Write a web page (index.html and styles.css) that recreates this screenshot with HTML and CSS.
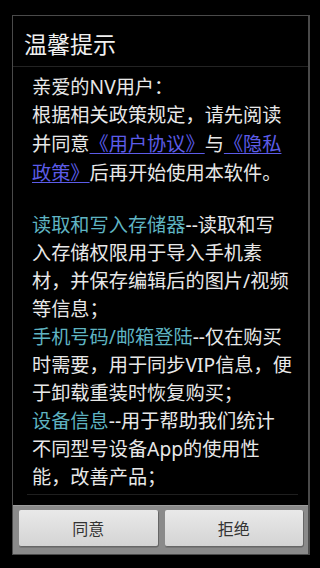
FILE: index.html
```html
<!DOCTYPE html>
<html lang="zh-CN">
<head>
<meta charset="utf-8">
<title>温馨提示</title>
<link rel="stylesheet" href="styles.css">
</head>
<body>
<div class="dialog">
  <div class="title">温馨提示</div>
  <div class="content">
    <p class="para">亲爱的NV用户：<br>根据相关政策规定，请先阅读<br>并同意<a class="link">《用户协议》</a>与<a class="link">《隐私<br>政策》</a>后再开始使用本软件。</p>
    <p class="para"><span class="hl">读取和写入存储器</span>--读取和写<br>入存储权限用于导入手机素<br>材，并保存编辑后的图片/视频<br>等信息；<br><span class="hl">手机号码/邮箱登陆</span>--仅在购买<br>时需要，用于同步VIP信息，便<br>于卸载重装时恢复购买；<br><span class="hl">设备信息</span>--用于帮助我们统计<br>不同型号设备App的使用性<br>能，改善产品；</p>
    <div class="fade-line"></div>
  </div>
  <div class="actions">
    <div class="btn">同意</div>
    <div class="btn">拒绝</div>
  </div>
</div>
</body>
</html>
```

FILE: styles.css
```css
html, body {
  margin: 0;
  padding: 0;
  background: #000;
}
body {
  width: 320px;
  height: 568px;
  overflow: hidden;
  font-family: "Noto Sans", "Noto Sans CJK SC", sans-serif;
}
.dialog {
  margin: 15px 0 0 12px;
  width: 298px;
  box-sizing: border-box;
  border: 1px solid #4a4a4a;
  border-right-width: 2px;
  background: #000;
}
.title {
  height: 51px;
  box-sizing: border-box;
  padding-left: 11px;
  display: flex;
  align-items: center;
  padding-top: 3px;
  font-size: 23px;
  color: #f0f0f0;
  border-bottom: 1px solid #232323;
  font-family: "Noto Sans CJK SC", sans-serif;
}
.content {
  padding: 6px 0 0 0;
}
.para {
  margin: 0 0 0 19px;
  font-size: 19.2px;
  line-height: 28px;
  color: #e8e8e8;
  white-space: nowrap;
}
.para + .para {
  margin-top: 24px;
}
.link {
  font-family: "Noto Sans CJK SC", sans-serif;
  color: #5c5ce8;
  text-decoration: underline;
  text-decoration-thickness: 1px;
  text-underline-offset: 2px;
}
.hl {
  color: #5fb4c2;
}
.fade-line {
  margin: 3px 0 0 14px;
  width: 271px;
  height: 1px;
  background: #1f1f1f;
}
.actions {
  margin-top: 10px;
  height: 49px;
  box-sizing: border-box;
  background: #8a8a8a;
  border-top: 1px solid #9c9c9c;
  padding: 4px 5px 0 6px;
  display: flex;
  gap: 7px;
  align-items: flex-start;
}
.btn {
  flex: 1;
  height: 36px;
  box-sizing: border-box;
  background: linear-gradient(#e9e9e9, #d4d4d4);
  border-radius: 2px;
  box-shadow: 1px 1px 0 #666, 0 2px 0 #777;
  display: flex;
  align-items: center;
  justify-content: center;
  font-family: "Noto Sans CJK SC", sans-serif;
  font-size: 16px;
  color: #333;
}
```
